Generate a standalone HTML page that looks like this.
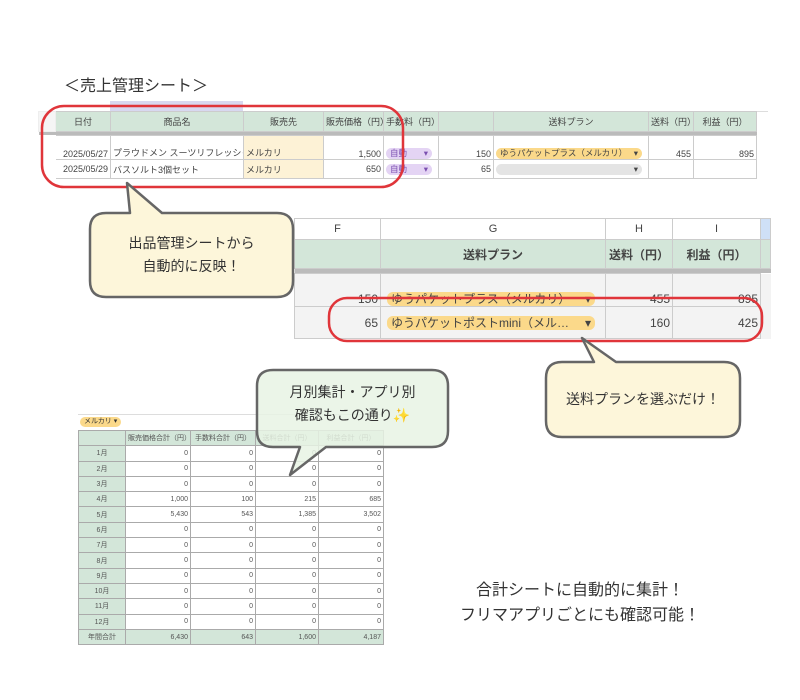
<!DOCTYPE html>
<html><head><meta charset="utf-8"><style>
body{margin:0;width:800px;height:700px;background:#fff;position:relative;overflow:hidden;font-family:"Liberation Sans","Noto Sans CJK JP",sans-serif;color:#333}
.a{position:absolute}
table{border-collapse:collapse;position:absolute;table-layout:fixed}
td{padding:0 2px;overflow:hidden;white-space:nowrap;border:1px solid #ccc}
.t1 td{font-size:9px;height:18px;color:#444}
.g{background:#d3e6d9;text-align:center}
.r{text-align:right}
.pill{display:inline-flex;justify-content:space-between;border-radius:6px;padding:0 4px;line-height:11px;box-sizing:border-box;white-space:nowrap;overflow:hidden;vertical-align:middle}
.t1 .pill{font-size:8.5px}
.t2 td{font-size:12px;color:#444}
.t3 td{font-size:7px;height:14.3px;color:#555;border-color:#aaa}
.bt{font-size:14.5px;color:#333;text-align:center;line-height:23px}
</style></head><body>
<div class="a" style="left:64px;top:72px;font-size:16px;color:#333">＜売上管理シート＞</div>

<!-- table 1 -->
<div class="a" style="left:38px;top:100px;width:730px;height:11px;border-bottom:1px solid #ddd"></div>
<div class="a" style="left:110px;top:101px;width:133px;height:10px;background:#d8d8f0"></div>
<table class="t1" style="left:38px;top:111px;width:718px">
<colgroup><col style="width:17px"><col style="width:55px"><col style="width:133px"><col style="width:80px"><col style="width:60px"><col style="width:55px"><col style="width:55px"><col style="width:155px"><col style="width:45px"><col style="width:63px"></colgroup>
<tr style="height:20px"><td style="background:#f5f5f5;border-color:#eee"></td><td class="g">日付</td><td class="g">商品名</td><td class="g">販売先</td><td class="g">販売価格（円）</td><td class="g">手数料（円）</td><td class="g"></td><td class="g">送料プラン</td><td class="g">送料（円）</td><td class="g">利益（円）</td></tr>
<tr style="height:4px"><td colspan="10" style="height:3px;padding:0;background:#bbb;border:0"></td></tr>
<tr style="height:24px;vertical-align:bottom"><td style="border-color:#fff"></td><td class="r">2025/05/27</td><td>プラウドメン スーツリフレッシャー</td><td style="background:#fdf2d6">メルカリ</td><td class="r">1,500</td><td><span class="pill" style="background:#e4d4f4;color:#7b4fb0;width:46px"><span>自動</span><span>▾</span></span></td><td class="r">150</td><td><span class="pill" style="background:#fbd98a;width:146px"><span>ゆうパケットプラス（メルカリ）</span><span>▾</span></span></td><td class="r">455</td><td class="r">895</td></tr>
<tr style="height:19px"><td style="border-color:#fff"></td><td class="r">2025/05/29</td><td>バスソルト3個セット</td><td style="background:#fdf2d6">メルカリ</td><td class="r">650</td><td><span class="pill" style="background:#e4d4f4;color:#7b4fb0;width:46px"><span>自動</span><span>▾</span></span></td><td class="r">65</td><td><span class="pill" style="background:#e4e4e4;width:146px;justify-content:flex-end"><span>▾</span></span></td><td></td><td></td></tr>
</table>

<!-- table 2 -->
<table class="t2" style="left:294px;top:218px;width:476px">
<colgroup><col style="width:86px"><col style="width:225px"><col style="width:67px"><col style="width:88px"><col style="width:10px"></colgroup>
<tr style="height:21px"><td style="text-align:center;font-size:11px">F</td><td style="text-align:center;font-size:11px">G</td><td style="text-align:center;font-size:11px">H</td><td style="text-align:center;font-size:11px">I</td><td style="background:#cfe0f7"></td></tr>
<tr style="height:29px"><td class="g"></td><td class="g" style="font-weight:bold">送料プラン</td><td class="g" style="font-weight:bold">送料（円）</td><td class="g" style="font-weight:bold">利益（円）</td><td class="g"></td></tr>
<tr><td colspan="5" style="height:4px;padding:0;background:#bbb;border:0"></td></tr>
<tr style="height:33px;vertical-align:bottom;background:#f3f3f3"><td class="r">150</td><td style="padding-left:6px"><span class="pill" style="background:#fbd98a;width:208px;line-height:14px"><span>ゆうパケットプラス（メルカリ）</span><span>▾</span></span></td><td class="r">455</td><td class="r">895</td><td style="border:0"></td></tr>
<tr style="height:32px;background:#f3f3f3"><td class="r">65</td><td style="padding-left:6px"><span class="pill" style="background:#fbd98a;width:208px;line-height:14px"><span>ゆうパケットポストmini（メル…</span><span>▾</span></span></td><td class="r">160</td><td class="r">425</td><td style="border:0"></td></tr>
</table>

<!-- table 3 -->
<div class="a" style="left:78px;top:408px;width:305px;height:6px;border-bottom:1px solid #ddd"></div>
<div class="a" style="left:80px;top:417px;font-size:7px;background:#fbd98a;border-radius:5px;padding:0 4px;line-height:10px">メルカリ ▾</div>
<table class="t3" style="left:78px;top:430px;width:305px">
<colgroup><col style="width:47px"><col style="width:65px"><col style="width:65px"><col style="width:63px"><col style="width:65px"></colgroup>
<tr><td class="g"></td><td class="g">販売価格合計（円）</td><td class="g">手数料合計（円）</td><td class="g">送料合計（円）</td><td class="g">利益合計（円）</td></tr>
<tr><td class="g">1月</td><td class="r">0</td><td class="r">0</td><td class="r">0</td><td class="r">0</td></tr>
<tr><td class="g">2月</td><td class="r">0</td><td class="r">0</td><td class="r">0</td><td class="r">0</td></tr>
<tr><td class="g">3月</td><td class="r">0</td><td class="r">0</td><td class="r">0</td><td class="r">0</td></tr>
<tr><td class="g">4月</td><td class="r">1,000</td><td class="r">100</td><td class="r">215</td><td class="r">685</td></tr>
<tr><td class="g">5月</td><td class="r">5,430</td><td class="r">543</td><td class="r">1,385</td><td class="r">3,502</td></tr>
<tr><td class="g">6月</td><td class="r">0</td><td class="r">0</td><td class="r">0</td><td class="r">0</td></tr>
<tr><td class="g">7月</td><td class="r">0</td><td class="r">0</td><td class="r">0</td><td class="r">0</td></tr>
<tr><td class="g">8月</td><td class="r">0</td><td class="r">0</td><td class="r">0</td><td class="r">0</td></tr>
<tr><td class="g">9月</td><td class="r">0</td><td class="r">0</td><td class="r">0</td><td class="r">0</td></tr>
<tr><td class="g">10月</td><td class="r">0</td><td class="r">0</td><td class="r">0</td><td class="r">0</td></tr>
<tr><td class="g">11月</td><td class="r">0</td><td class="r">0</td><td class="r">0</td><td class="r">0</td></tr>
<tr><td class="g">12月</td><td class="r">0</td><td class="r">0</td><td class="r">0</td><td class="r">0</td></tr>
<tr style="background:#d3e6d9"><td style="text-align:center">年間合計</td><td class="r">6,430</td><td class="r">643</td><td class="r">1,600</td><td class="r">4,187</td></tr>
</table>

<svg class="a" style="left:0;top:0" width="800" height="700">
<g fill="none" stroke="#e0353a" stroke-width="2.5">
<rect x="42" y="106" width="361" height="81" rx="22"/>
<rect x="329" y="298" width="433" height="43" rx="18"/>
</g>
<g stroke="#666" stroke-width="2.5" stroke-linejoin="round">
<path d="M110 213 H130 L127 183 L162 213 H277 Q293 213 293 229 V281 Q293 297 277 297 H106 Q90 297 90 281 V229 Q90 213 106 213 Z" fill="#fdf6da"/>
<path d="M562 362 H594 L582 338 L616 362 H724 Q740 362 740 378 V421 Q740 437 724 437 H562 Q546 437 546 421 V378 Q546 362 562 362 Z" fill="#fdf6da"/>
<path d="M273 370 H432 Q448 370 448 386 V431 Q448 447 432 447 H326 L290 475 L300 447 H273 Q257 447 257 431 V386 Q257 370 273 370 Z" fill="#e8f3e4" fill-opacity="0.85"/>
</g>
</svg>
<div class="a bt" style="left:90px;top:232px;width:203px;font-size:14px">出品管理シートから<br>自動的に反映！</div>
<div class="a bt" style="left:546px;top:388px;width:194px;font-size:14px">送料プランを選ぶだけ！</div>
<div class="a bt" style="left:257px;top:381px;width:191px;font-size:14px">月別集計・アプリ別<br>確認もこの通り<span style="color:#f5b800">✨</span></div>
<div class="a bt" style="left:410px;top:578px;width:340px;font-size:16px;line-height:25px">合計シートに自動的に集計！<br>フリマアプリごとにも確認可能！</div>
</body></html>
